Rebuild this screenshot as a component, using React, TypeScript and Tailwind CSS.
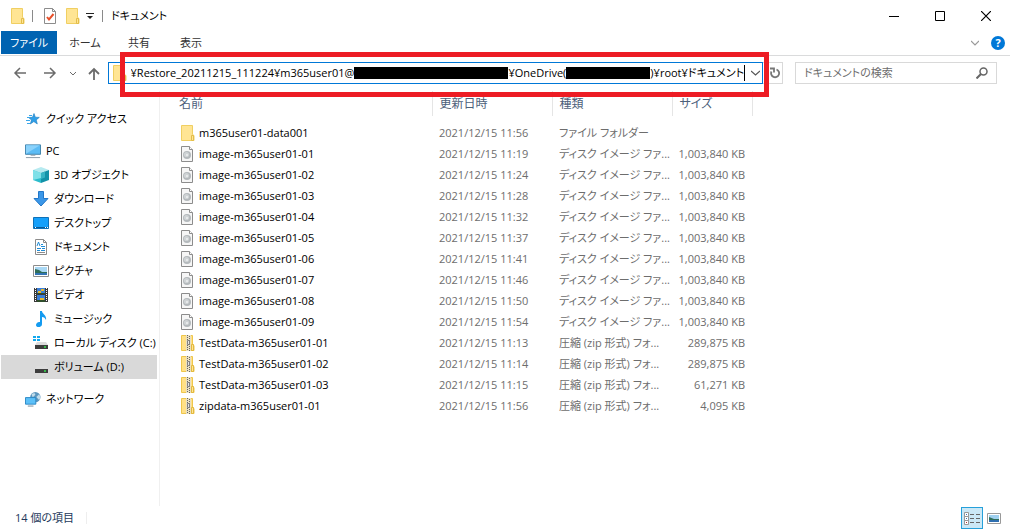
import type { ReactNode } from "react";

type FileRow = { name: string; date: string; kind: "folder" | "image" | "zip"; size?: string };

const files: FileRow[] = [
  { name: "m365user01-data001", date: "2021/12/15 11:56", kind: "folder" },
  { name: "image-m365user01-01", date: "2021/12/15 11:19", kind: "image", size: "1,003,840 KB" },
  { name: "image-m365user01-02", date: "2021/12/15 11:24", kind: "image", size: "1,003,840 KB" },
  { name: "image-m365user01-03", date: "2021/12/15 11:28", kind: "image", size: "1,003,840 KB" },
  { name: "image-m365user01-04", date: "2021/12/15 11:32", kind: "image", size: "1,003,840 KB" },
  { name: "image-m365user01-05", date: "2021/12/15 11:37", kind: "image", size: "1,003,840 KB" },
  { name: "image-m365user01-06", date: "2021/12/15 11:41", kind: "image", size: "1,003,840 KB" },
  { name: "image-m365user01-07", date: "2021/12/15 11:46", kind: "image", size: "1,003,840 KB" },
  { name: "image-m365user01-08", date: "2021/12/15 11:50", kind: "image", size: "1,003,840 KB" },
  { name: "image-m365user01-09", date: "2021/12/15 11:54", kind: "image", size: "1,003,840 KB" },
  { name: "TestData-m365user01-01", date: "2021/12/15 11:13", kind: "zip", size: "289,875 KB" },
  { name: "TestData-m365user01-02", date: "2021/12/15 11:14", kind: "zip", size: "289,875 KB" },
  { name: "TestData-m365user01-03", date: "2021/12/15 11:15", kind: "zip", size: "61,271 KB" },
  { name: "zipdata-m365user01-01", date: "2021/12/15 11:56", kind: "zip", size: "4,095 KB" },
];

const kindLabel = {
  folder: "ファイル フォルダー",
  image: "ディスク イメージ ファ...",
  zip: "圧縮 (zip 形式) フォ...",
};

function FolderIcon() {
  return (
    <svg width="14" height="16" viewBox="0 0 14 16" className="shrink-0">
      <path d="M.5.5h11v9l1.5 1v5H.5z" fill="#ffe594" stroke="#f0cf62" />
      <path d="M10.5 10.5h2v5h-2z" fill="#ffe594" stroke="#e3bd4b" />
    </svg>
  );
}

function DiscIcon() {
  return (
    <svg width="14" height="16" viewBox="0 0 14 16" className="shrink-0">
      <path d="M.5.5h8l3 3v12H.5z" fill="#f6f6f6" stroke="#8c8c8c" />
      <path d="M8.5.5v3h3" fill="#fff" stroke="#8c8c8c" />
      <circle cx="6" cy="9" r="4" fill="#b4b9bc" />
      <circle cx="5.5" cy="8.5" r="2.6" fill="#cfd3d5" />
      <circle cx="6" cy="9" r="1" fill="#eef0f1" />
    </svg>
  );
}

function ZipIcon() {
  return (
    <svg width="14" height="16" viewBox="0 0 14 16" className="shrink-0">
      <path d="M.5.5h11v9l1.5 1v5H.5z" fill="#ffe087" stroke="#eec64c" />
      <path d="M10.5 9.5h2v6h-2z" fill="#ffe594" stroke="#e3b93f" />
      <path d="M5 0h5v16H5z" fill="#e9dfc0" />
      <path d="M6.5 0v16M8.5 1v15" stroke="#666" strokeDasharray="1 1" />
      <path d="M6.5 5.5h2v4h-2z" fill="#e4e4e4" stroke="#808080" />
    </svg>
  );
}

const fileIcon = { folder: <FolderIcon />, image: <DiscIcon />, zip: <ZipIcon /> };

const StarIcon = (
  <svg width="16" height="16" viewBox="0 0 16 16">
    <path d="m9 2.5 1.3 3.7 4 .2-3.1 2.5 1.1 4-3.5-2.3-3.5 2.4 1.2-4L3.5 6.5l4-.2z" fill="#2f9fe8" stroke="#1678bd" strokeWidth=".6" />
    <path d="M4 4.5h3M2 6.5h3M1 9.5h4M2 12.5h3" stroke="#3ba7ea" />
  </svg>
);

const PcIcon = (
  <svg width="17" height="16" viewBox="0 0 17 16">
    <path d="M.5 1.5h16v10H.5z" fill="#5cbcf5" stroke="#3c7fa8" />
    <path d="M1 11V2h15z" fill="#8ad2fb" />
    <path d="M6 12.5h5M1 15h15" stroke="#8a9aa6" />
  </svg>
);

const CubeIcon = (
  <svg width="16" height="16" viewBox="0 0 16 16">
    <path d="m8 0 8 3-8 3-8-3z" fill="#b6eaf0" />
    <path d="m0 3 8 3v10l-8-3z" fill="#2bbccc" />
    <path d="m16 3-8 3v10l8-3z" fill="#1292a8" />
    <path d="m0 3 8 3v5l-8 2z" fill="#7fe0e8" />
    <path d="m8 6 4-1.5v6L8 12z" fill="#35b4c4" />
  </svg>
);

const DownIcon = (
  <svg width="16" height="16" viewBox="0 0 16 16">
    <path d="M5.5.5h5v7H15L8 15 1 7.500h4.500z" fill="#3b97e8" stroke="#2277c8" />
  </svg>
);

const DesktopIcon = (
  <svg width="16" height="16" viewBox="0 0 16 16">
    <path d="M.5 2.5h15v11H.5z" fill="#16a0fa" stroke="#0e71b8" />
    <path d="M1 12.5h14" stroke="#0a5a96" />
    <path d="M2 12.5h1M12 12.5h1M14 12.5h1" stroke="#fff" />
  </svg>
);

const DocumentIcon = (
  <svg width="16" height="16" viewBox="0 0 16 16">
    <path d="M2.5.5h8l3 3v12h-11z" fill="#fff" stroke="#8c8c8c" />
    <path d="M10.5.5v3h3" fill="none" stroke="#8c8c8c" />
    <path d="m4 7 1.5-4L7 7M8 5.5h2M8 7.5h4M4 9.5h4M9 9.5h3M4 11.5h3M8 11.5h4" stroke="#1e8bd6" fill="none" />
    <path d="M4 13.5h8" stroke="#8c8c8c" />
  </svg>
);

const PictureIcon = (
  <svg width="16" height="16" viewBox="0 0 16 16">
    <path d="M.5 2.5h15v11H.5z" fill="#fff" stroke="#8c8c8c" />
    <path d="M2 4h12v8H2z" fill="#a9d8f5" />
    <path d="m2 6 4 1 3 2h5v1H2z" fill="#2f6d59" />
    <path d="M2 10h12v2H2z" fill="#3274b5" />
  </svg>
);

const VideoIcon = (
  <svg width="16" height="16" viewBox="0 0 16 16">
    <path d="M1 1h14v14H1z" fill="#3a3a3a" />
    <path d="M2.5 1v14M13.5 1v14" stroke="#fff" strokeDasharray="1 1" />
    <path d="M4 1h8v6H4zM4 8h8v7H4z" fill="#3b7fd8" />
    <path d="M5 4h3v2H5zM8 2h3v2H8zM7 11h4v2H7z" fill="#e7b92e" />
    <path d="M4 6h8v1H4zM4 13h8v2H4z" fill="#2f4e2c" />
  </svg>
);

const MusicIcon = (
  <svg width="16" height="16" viewBox="0 0 16 16">
    <path d="M7 0h2c0 3 5 4 4 9-1-2-2-3-4-3v7c0 4-6 4-6 1 0-2 2-3.5 4-3z" fill="#149bf0" />
  </svg>
);

function DriveIcon({ windows }: { windows?: boolean }) {
  return (
    <svg width="16" height="16" viewBox="0 0 16 16">
      {windows && <path d="M0 1h3v2H0zM4 1h3v2H4zM0 4h3v2H0zM4 4h3v2H4z" fill="#12a8ee" />}
      <path d="M4 7h9l2 3H2z" fill="#dcdcdc" />
      <path d="M2 10h13v4H2z" fill="#3d3d3d" />
      <path d="M11 12h2" stroke="#35e04c" strokeWidth="1.5" />
    </svg>
  );
}

const NetworkIcon = (
  <svg width="17" height="16" viewBox="0 0 17 16">
    <circle cx="11" cy="6" r="5.5" fill="#5c96bd" />
    <path d="M7 3c2-2 4-1 4 0s-2 3-3 3zM12 6l3-3c2 3 1 5 0 6z" fill="#c2dcea" />
    <path d="M.5 6.5h11v7H.5z" fill="#5cc0f8" stroke="#2a86c4" />
    <path d="M3 15.5h6" stroke="#6f8796" />
  </svg>
);

function SideItem({ icon, label, nested, active }: { icon: ReactNode; label: string; nested?: boolean; active?: boolean }) {
  return (
    <a
      href="#"
      className={`flex h-6 items-center gap-[5px] whitespace-nowrap text-black ${nested ? "pl-8" : "pl-6"} ${active ? "bg-[#d9d9d9]" : ""}`}
    >
      <span className="flex w-4 shrink-0 justify-center">{icon}</span>
      {label}
    </a>
  );
}

function TitleBar() {
  return (
    <header className="flex h-[31px] items-center pl-[11px] pr-px">
      <div className="flex items-center">
        <FolderIcon />
        <span className="mx-[7px] h-3 w-px bg-[#8a8a8a]" />
        <button aria-label="プロパティ" className="ml-1 mr-2">
          <svg width="14" height="16" viewBox="0 0 14 16">
            <path d="M.5.5h8l3 3v12H.5z" fill="#fff" stroke="#8c8c8c" />
            <path d="M8.5.5v3h3" fill="none" stroke="#8c8c8c" />
            <path d="m3 9 2 2.500L9.500 6" fill="none" stroke="#e8502a" strokeWidth="2" />
          </svg>
        </button>
        <button aria-label="新しいフォルダー" className="mr-1.5"><FolderIcon /></button>
        <button aria-label="カスタマイズ">
          <svg width="8" height="6" viewBox="0 0 8 6">
            <path d="M0 .5h8" stroke="#222" />
            <path d="M1 3h6L4 6z" fill="#222" />
          </svg>
        </button>
        <span className="mx-2 h-3 w-px bg-[#8a8a8a]" />
      </div>
      <h1 className="text-black">ドキュメント</h1>
      <div className="ml-auto flex h-full">
        <button aria-label="最小化" className="flex w-[46px] items-center justify-center">
          <svg width="10" height="10"><path d="M0 5.5h10" stroke="#000" /></svg>
        </button>
        <button aria-label="最大化" className="flex w-[46px] items-center justify-center">
          <svg width="10" height="10"><path d="M.5.5h9v9h-9z" fill="none" stroke="#000" /></svg>
        </button>
        <button aria-label="閉じる" className="flex w-[46px] items-center justify-center">
          <svg width="10" height="10"><path d="m0 0 10 10M10 0 0 10" stroke="#000" strokeWidth="1.2" /></svg>
        </button>
      </div>
    </header>
  );
}

function Ribbon() {
  return (
    <nav className="flex h-[25px] border-b border-[#dadbdc] pb-px pl-px text-[#333]">
      <button className="w-14 bg-[#0063b1] text-white">ファイル</button>
      <button className="w-14">ホーム</button>
      <button className="w-[52px]">共有</button>
      <button className="w-[52px]">表示</button>
      <div className="ml-auto flex items-center gap-3 pr-[5px]">
        <button aria-label="リボンの展開">
          <svg width="8" height="6" fill="none"><path d="m0 1 4 4 4-4" stroke="#999" strokeWidth="1.2" /></svg>
        </button>
        <button aria-label="ヘルプ" className="flex h-3.5 w-3.5 items-center justify-center rounded-full bg-[#0078d7] text-[11px] font-bold text-white">?</button>
      </div>
    </nav>
  );
}

function AddressBar() {
  const seg = "field-sizing-content shrink-0 bg-transparent text-black outline-none";
  return (
    <div className="flex h-[35px] items-start pl-[13px] pr-[13px] pt-1.5">
      <div className="flex h-[22px] w-[95px] items-center text-[#6b6b6b]">
        <button aria-label="戻る">
          <svg width="14" height="12" fill="none" stroke="currentColor" strokeWidth="1.5"><path d="M13 6H2M7 1 2 6l5 5" /></svg>
        </button>
        <button aria-label="進む" className="ml-4">
          <svg width="14" height="12" fill="none" stroke="currentColor" strokeWidth="1.5"><path d="M1 6h11M7 1l5 5-5 5" /></svg>
        </button>
        <button aria-label="履歴" className="ml-[13px]">
          <svg width="6" height="5" fill="none" stroke="currentColor"><path d="m0 1 3 3 3-3" /></svg>
        </button>
        <button aria-label="上へ" className="ml-3">
          <svg width="12" height="13" fill="none" stroke="currentColor" strokeWidth="1.8"><path d="M6 13V2M1 7l5-5 5 5" /></svg>
        </button>
      </div>
      <div className="relative flex h-[22px] min-w-0 flex-1">
        <div className="flex min-w-0 flex-1 items-center border border-[#0078d7] pl-1 pr-0.5">
          <FolderIcon />
          <div className="ml-1 flex min-w-0 flex-1 items-center justify-end overflow-hidden">
            <input aria-label="パス" readOnly defaultValue="¥Restore_20211215_111224¥m365user01@" className={seg} />
            <span className="h-3 w-[154px] shrink-0 bg-black" />
            <input aria-label="サービス" readOnly defaultValue="¥OneDrive(" className={seg} />
            <span className="h-3 w-[84px] shrink-0 bg-black" />
            <input aria-label="フォルダー" readOnly defaultValue=")¥root¥ドキュメント" className={seg} />
            <span className="h-4 w-px shrink-0 bg-black" />
          </div>
          <button aria-label="以前の場所" className="ml-1.5">
            <svg width="9" height="6" fill="none"><path d="m0 1 4.500 4L9 1" stroke="#555" strokeWidth="1.2" /></svg>
          </button>
        </div>
        <button aria-label="更新" className="flex w-5 items-center justify-end border border-l-0 border-[#d9d9d9] pr-0.5">
          <svg width="11" height="12" fill="none" stroke="#777" strokeWidth="1.8"><path d="M7.500 2.500a4 4 0 1 1-5 2M1 1.500h4v4" /></svg>
        </button>
        {/* red highlight frame around the path */}
        <div className="pointer-events-none absolute -top-2.5 -bottom-[13px] left-3 right-3.5 border-5 border-[#ed1c24]" />
      </div>
      <label className="ml-3 flex h-[22px] w-[202px] items-center border border-[#d9d9d9] pl-2 pr-2">
        <input type="search" aria-label="検索" placeholder="ドキュメントの検索" className="min-w-0 flex-1 outline-none placeholder:text-[#6d6d6d]" />
        <svg width="12" height="12" fill="none" stroke="#666" strokeWidth="1.5"><circle cx="7.5" cy="4.5" r="3.5" /><path d="m5 7-4.500 4.500" strokeWidth="2" /></svg>
      </label>
    </div>
  );
}

function Sidebar() {
  return (
    <aside className="flex w-40 shrink-0 flex-col gap-2 border-r border-[#f0f0f0] pl-px pr-0.5 pt-4">
      <SideItem icon={StarIcon} label="クイック アクセス" />
      <div>
        <SideItem icon={PcIcon} label="PC" />
        <SideItem nested icon={CubeIcon} label="3D オブジェクト" />
        <SideItem nested icon={DownIcon} label="ダウンロード" />
        <SideItem nested icon={DesktopIcon} label="デスクトップ" />
        <SideItem nested icon={DocumentIcon} label="ドキュメント" />
        <SideItem nested icon={PictureIcon} label="ピクチャ" />
        <SideItem nested icon={VideoIcon} label="ビデオ" />
        <SideItem nested icon={MusicIcon} label="ミュージック" />
        <SideItem nested icon={<DriveIcon windows />} label="ローカル ディスク (C:)" />
        <SideItem nested active icon={<DriveIcon />} label="ボリューム (D:)" />
      </div>
      <SideItem icon={NetworkIcon} label="ネットワーク" />
    </aside>
  );
}

function FileTable() {
  const th = "border-r border-[#e5e5e5] pl-[7px] text-left font-normal";
  return (
    <table className="ml-3 h-fit table-fixed border-collapse text-[#6d6d6d]">
      <colgroup>
        <col className="w-[260px]" />
        <col className="w-[120px]" />
        <col className="w-[120px]" />
        <col className="w-20" />
      </colgroup>
      <thead className="text-[12px] text-[#4c607a]">
        <tr className="h-[25px]">
          <th className={th}>名前</th>
          <th className={th}>更新日時</th>
          <th className={th}>種類</th>
          <th className={th}>サイズ</th>
        </tr>
      </thead>
      <tbody>
        <tr className="h-1.5"><td colSpan={4} /></tr>
        {files.map((f) => (
          <tr key={f.name} className="h-[21px] whitespace-nowrap">
            <td className="p-0 pl-[9px] text-black">
              <span className="flex items-center gap-1">
                {fileIcon[f.kind]}
                {f.name}
              </span>
            </td>
            <td className="p-0 pl-[7px]">{f.date}</td>
            <td className="p-0 pl-[7px]">{kindLabel[f.kind]}</td>
            <td className="p-0 pr-[7px] text-right">{f.size}</td>
          </tr>
        ))}
      </tbody>
    </table>
  );
}

function StatusBar() {
  return (
    <footer className="flex h-6 items-center pl-[15px] pr-[9px] text-[#1e395b]">
      <span>14 個の項目</span>
      <span className="ml-3 h-3 w-px bg-[#eee]" />
      <div className="ml-auto flex items-center gap-1">
        <button aria-label="詳細" className="flex h-[22px] w-[22px] items-center justify-center border border-[#26a0da] bg-[#cbe8f6]">
          <svg width="16" height="13" fill="none">
            <path d="M.5.5h4v4h-4zM.5 4.5h4v4h-4zM.5 8.5h4v4h-4z" fill="#fff" stroke="#999" />
            <path d="M6 2.5h4M12 2.5h4M6 6.5h4M12 6.5h4M6 10.5h4M12 10.5h4" stroke="#666" />
            <path d="M2 2.5h1M2 6.5h1" stroke="#3a7ab8" />
            <path d="M2 10.5h1" stroke="#b03030" />
          </svg>
        </button>
        <button aria-label="大アイコン">
          <svg width="14" height="11">
            <path d="M.5.5h13v10H.5z" fill="#fff" stroke="#999" />
            <path d="M2 2h10v4H2z" fill="#9fd0ef" />
            <path d="m2 4 5 2h5v1H2z" fill="#2f6d59" />
            <path d="M2 7h10v2H2z" fill="#2f6fb0" />
          </svg>
        </button>
      </div>
    </footer>
  );
}

export default function App() {
  return (
    <div className="flex min-h-screen flex-col bg-white font-['Open_Sans','Noto_Sans_CJK_JP',sans-serif] text-[11px] leading-4 [font-feature-settings:'palt']">
      <TitleBar />
      <Ribbon />
      <AddressBar />
      <main className="flex flex-1">
        <Sidebar />
        <FileTable />
      </main>
      <StatusBar />
    </div>
  );
}
